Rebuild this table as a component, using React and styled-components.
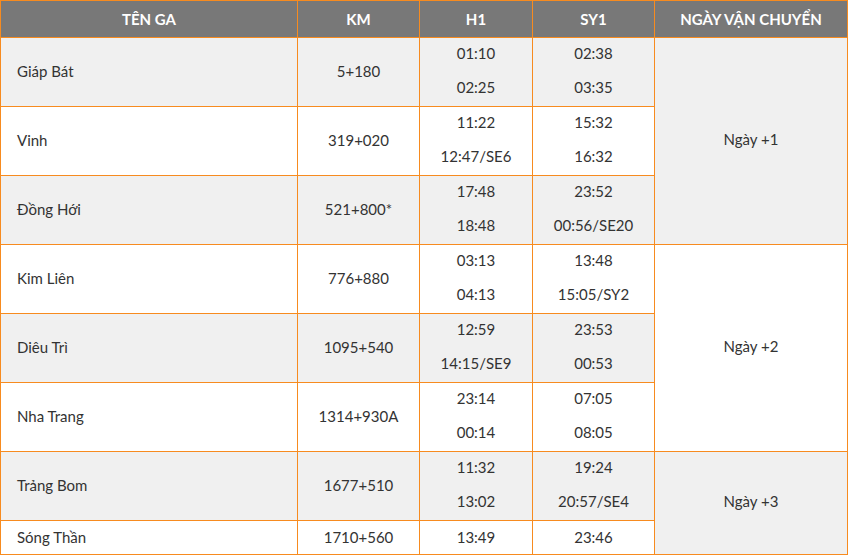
import React from 'react';
import styled, { createGlobalStyle } from 'styled-components';

const GlobalStyle = createGlobalStyle`
  body {
    margin: 0;
    background: #fff;
    font-family: Lato, "Noto Sans", sans-serif;
    color: #333;
  }
`;

const Table = styled.table`
  width: 847px;
  border-collapse: collapse;
  table-layout: fixed;
  font-size: 15px;
`;

const HeadCell = styled.th`
  height: 36px;
  padding: 0;
  background: #787878;
  color: #fff;
  font-weight: 700;
  font-size: 15px;
  text-align: center;
  vertical-align: middle;
  border: 1px solid #f78b1f;
`;

const Cell = styled.td`
  height: ${(p) => (p.$short ? '31px' : '66px')};
  padding: ${(p) => (p.$left ? '0 0 2px 16px' : '0 0 2px')};
  background: ${(p) => (p.$shade ? '#f0f0f0' : '#fff')};
  text-align: ${(p) => (p.$left ? 'left' : 'center')};
  vertical-align: middle;
  border: 1px solid #f78b1f;
  line-height: 20px;
`;

const TimeCell = styled(Cell)`
  height: 68px;
  padding: 0;
`;

const DayCell = styled(Cell)`
  height: auto;
  padding-bottom: 4px;
`;

const Line = styled.div`
  height: 34px;
  line-height: 30px;
`;

const rows = [
  { name: 'Giáp Bát', km: '5+180', h1: ['01:10', '02:25'], sy1: ['02:38', '03:35'], day: { text: 'Ngày +1', span: 3 } },
  { name: 'Vinh', km: '319+020', h1: ['11:22', '12:47/SE6'], sy1: ['15:32', '16:32'] },
  { name: 'Đồng Hới', km: '521+800*', h1: ['17:48', '18:48'], sy1: ['23:52', '00:56/SE20'] },
  { name: 'Kim Liên', km: '776+880', h1: ['03:13', '04:13'], sy1: ['13:48', '15:05/SY2'], day: { text: 'Ngày +2', span: 3 } },
  { name: 'Diêu Trì', km: '1095+540', h1: ['12:59', '14:15/SE9'], sy1: ['23:53', '00:53'] },
  { name: 'Nha Trang', km: '1314+930A', h1: ['23:14', '00:14'], sy1: ['07:05', '08:05'] },
  { name: 'Trảng Bom', km: '1677+510', h1: ['11:32', '13:02'], sy1: ['19:24', '20:57/SE4'], day: { text: 'Ngày +3', span: 2 } },
  { name: 'Sóng Thần', km: '1710+560', h1: ['13:49'], sy1: ['23:46'] },
];

const Times = ({ list }) =>
  list.length === 1 ? list[0] : list.map((t) => <Line key={t}>{t}</Line>);

export default function App() {
  let group = 0;
  return (
    <>
      <GlobalStyle />
      <Table>
        <colgroup>
          <col style={{ width: 297 }} />
          <col style={{ width: 122 }} />
          <col style={{ width: 113 }} />
          <col style={{ width: 122 }} />
          <col style={{ width: 193 }} />
        </colgroup>
        <thead>
          <tr>
            <HeadCell>TÊN GA</HeadCell>
            <HeadCell>KM</HeadCell>
            <HeadCell>H1</HeadCell>
            <HeadCell>SY1</HeadCell>
            <HeadCell>NGÀY VẬN CHUYỂN</HeadCell>
          </tr>
        </thead>
        <tbody>
          {rows.map((r, i) => {
            const shade = i % 2 === 0;
            const short = r.h1.length === 1;
            const Time = short ? Cell : TimeCell;
            let dayCell = null;
            if (r.day) {
              dayCell = (
                <DayCell rowSpan={r.day.span} $shade={group % 2 === 0}>
                  {r.day.text}
                </DayCell>
              );
              group += 1;
            }
            return (
              <tr key={r.name}>
                <Cell $left $shade={shade} $short={short}>{r.name}</Cell>
                <Cell $shade={shade} $short={short}>{r.km}</Cell>
                <Time $shade={shade} $short={short}><Times list={r.h1} /></Time>
                <Time $shade={shade} $short={short}><Times list={r.sy1} /></Time>
                {dayCell}
              </tr>
            );
          })}
        </tbody>
      </Table>
    </>
  );
}
